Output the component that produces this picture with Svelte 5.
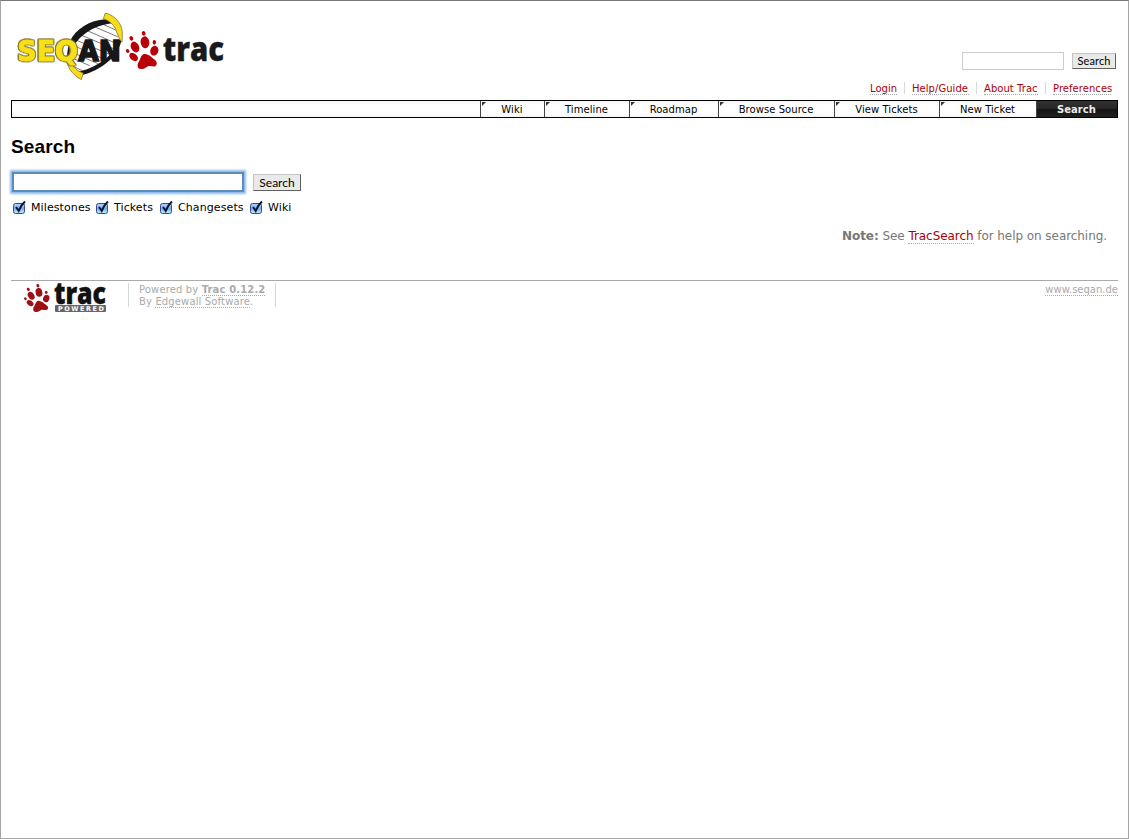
<script>
  const metaLinks = [
    { label: 'Login', width: 27 },
    { label: 'Help/Guide', width: 57 },
    { label: 'About Trac', width: 54 },
    { label: 'Preferences', width: 58 }
  ];
  const tabs = [
    { label: 'Wiki', width: 64 },
    { label: 'Timeline', width: 85 },
    { label: 'Roadmap', width: 89 },
    { label: 'Browse Source', width: 116 },
    { label: 'View Tickets', width: 105 },
    { label: 'New Ticket', width: 97 },
    { label: 'Search', width: 81, active: true }
  ];
  const filters = [
    { label: 'Milestones', width: 83 },
    { label: 'Tickets', width: 64 },
    { label: 'Changesets', width: 90 },
    { label: 'Wiki', width: 50 }
  ];
</script>

{#snippet paw(color)}
  <g fill={color}>
    <ellipse cx="46" cy="30" rx="13" ry="18" transform="rotate(-8 46 30)" />
    <ellipse cx="16" cy="44" rx="12" ry="17" transform="rotate(-26 16 44)" />
    <ellipse cx="74" cy="55" rx="12" ry="15" transform="rotate(18 74 55)" />
    <ellipse cx="12" cy="74" rx="15" ry="10" transform="rotate(42 12 74)" />
    <ellipse cx="42" cy="3" rx="5.5" ry="7" transform="rotate(-20 42 3)" />
    <ellipse cx="74" cy="30" rx="5" ry="7" />
    <ellipse cx="5" cy="18" rx="5.5" ry="7" transform="rotate(-25 5 18)" />
    <ellipse cx="-6" cy="56" rx="5" ry="6" transform="rotate(-40 -6 56)" />
    <path d="M50 66C36 60 34 75 29 85C22 94 21 109 33 110C45 112 50 103 57 101C65 99 74 107 80 98C86 86 71 80 64 73C60 69 56 68 50 66Z" />
  </g>
{/snippet}

<div class="page">
  <header>
    <div class="logo">
      <svg width="216" height="84" viewBox="0 0 648 252">
        <defs><clipPath id="helix"><path d="M291 50C242 59 185 92 181 147C179 170 188 186 208 205C253 193 318 157 330 115C333 85 318 57 291 50Z" /></clipPath></defs>
        <g clip-path="url(#helix)" stroke="#333" stroke-width="2">
          <path d="M165 150L245 185M165 133L295 190M175 115L310 175M185 100L325 160M200 85L335 142M220 72L340 125M240 60L345 105M265 52L350 90M160 170L225 201" />
        </g>
        <path d="M292 46L316 48L316 57C269 62 228 84 206 113C191 129 184 145 182 162L177 162C177 142 181 127 185 113C203 75 246 48 292 46Z" fill="#171717" />
        <path d="M329 107L341 107C333 145 303 176 272 193C248 207 227 213 211 216L212 203C250 195 305 166 319 132Z" fill="#171717" />
        <path d="M292 27C321 34 346 61 343 95L342 115C335 109 332 97 326 84C321 66 306 50 286 44Z" fill="#f8dc18" stroke="#6d631c" stroke-width="2" />
        <path d="M174 157C175 185 190 211 220 227L226 207C203 200 186 183 190 158Z" fill="#f8dc18" stroke="#6d631c" stroke-width="2" />
        <text x="28" y="172" textLength="182" lengthAdjust="spacingAndGlyphs" class="seq">SEQ</text>
        <text x="211" y="172" textLength="128" lengthAdjust="spacingAndGlyphs" class="an">AN</text>
        <g transform="translate(365 85)">{@render paw('#b90009')}</g>
        <text x="464" y="172" textLength="184" lengthAdjust="spacingAndGlyphs" class="tractext">trac</text>
      </svg>
    </div>
    <form class="quick"><input aria-label="Quick search" /><button type="button"><span>Search</span></button></form>
    <div class="meta">{#each metaLinks as link}<span class="metaitem"><a href="#top" style:width="{link.width}px">{link.label}</a></span>{/each}</div>
    <nav>{#each tabs as tab}<a href="#top" class:active={tab.active} style:width="{tab.width}px">{tab.label}</a>{/each}</nav>
  </header>
  <main>
    <h1>Search</h1>
    <form class="mainsearch"><input aria-label="Search terms" /><button type="button"><span>Search</span></button></form>
    <div class="filters">
      {#each filters as filter}
        <label style:width="{filter.width}px">
          <svg width="15" height="16" viewBox="0 0 15 16"><defs><linearGradient id="box" x2="0" y2="1"><stop stop-color="#b9d2f6" /><stop offset=".5" stop-color="#79afee" /><stop offset="1" stop-color="#bef0ff" /></linearGradient></defs><rect x=".5" y="3.5" width="11" height="10" rx="2" fill="url(#box)" stroke="#37488c" /><path d="M3 7L5.7 10.8Q8 5 12 1.5" fill="none" stroke="#08152f" stroke-width="2" /></svg>
          <span>{filter.label}</span>
        </label>
      {/each}
    </div>
    <p class="note"><b>Note:</b> See <a href="#top">TracSearch</a> for help on searching.</p>
  </main>
  <footer>
    <svg class="powered" width="84" height="32" viewBox="0 0 84 32">
      <g transform="translate(4 2) scale(.26 .245)">{@render paw('#9e1015')}</g>
      <text x="31" y="21" textLength="52" lengthAdjust="spacingAndGlyphs" class="smalltrac">trac</text>
      <rect x="32" y="22" width="51" height="7" rx="1" fill="#666" />
      <text x="35" y="28" textLength="46" class="powertext">POWERED</text>
    </svg>
    <p class="credits">Powered by <a href="#top"><b>Trac 0.12.2</b></a><br />By <a href="#top">Edgewall Software</a>.</p>
    <a class="site" href="#top">www.seqan.de</a>
  </footer>
</div>

<style>
  :global(body) { margin: 0; background: #fff; }
  * { box-sizing: border-box; }
  .page { width: 1129px; height: 839px; border: 1px solid #a5a5a5; border-top-color: #777; padding: 3px 10px; font-family: "DejaVu Sans", Verdana, sans-serif; color: #000; overflow: hidden; }
  header { display: grid; grid-template-columns: 216px 1fr; grid-template-rows: 77px 19px 18px; }
  .logo { grid-row: 1 / 3; margin-left: -3px; height: 84px; }
  .logo svg { display: block; overflow: visible; }
  .seq { font: bold 87px "DejaVu Sans"; fill: #f9df18; stroke: #f9df18; stroke-width: 3; filter: drop-shadow(1.5px 0 0 #81752a) drop-shadow(-1.5px 0 0 #81752a) drop-shadow(0 1.5px 0 #81752a) drop-shadow(0 -1.5px 0 #81752a); }
  .an { font: bold 87px "DejaVu Sans"; fill: #171717; stroke: #171717; stroke-width: 5; }
  .tractext { font: 800 99px "Open Sans"; fill: #1a1a1a; stroke: #1a1a1a; stroke-width: 1; }
  .quick { display: flex; justify-content: flex-end; align-items: flex-start; padding: 48px 2px 0 0; gap: 8px; }
  input { margin: 0; padding: 0; background: #fff; outline: 0; border-radius: 0; }
  .quick input { width: 102px; height: 18px; border: 1px solid #ccc; }
  button { display: flex; align-items: center; justify-content: center; padding: 0; border: 1px solid #c4c4c4; border-right-color: #606060; border-bottom-color: #606060; background: #e9e9e9; font: 11px/14px Lato, sans-serif; color: #000; }
  .quick button { width: 44px; height: 16px; margin-top: 1px; letter-spacing: .1px; }
  .meta { display: flex; justify-content: flex-end; padding-right: 7px; height: 19px; }
  .metaitem { display: flex; height: 12px; margin-top: 1px; padding-left: 7px; margin-left: 7px; border-left: 1px solid #d7d7d7; }
  .metaitem:first-child { border-left: 0; }
  .metaitem a { display: block; height: 13px; border-bottom: 1px dotted #aaa; color: #ad0008; text-decoration: none; font-size: 10px; line-height: 13px; white-space: nowrap; letter-spacing: .05px; }
  nav { grid-column: 1 / 3; display: flex; justify-content: flex-end; height: 18px; width: 1107px; border: 1px solid #000; background: linear-gradient(#f5f5f5, #fff 4px, #fff 10px, #f6f6f6); }
  nav a { position: relative; height: 16px; flex: none; padding-right: 1px; border-left: 1px solid #444; color: #000; font-size: 10px; line-height: 17px; text-align: center; text-decoration: none; white-space: nowrap; letter-spacing: .06px; }
  nav a::before { content: ""; position: absolute; left: 1px; top: 1px; border-top: 4px solid #333; border-right: 4px solid transparent; }
  nav .active { color: #eee; font-weight: bold; background: linear-gradient(#333, #252525 50%, #151515 51%, #202020); }
  nav .active::before { display: none; }
  h1 { margin: 18px 0 0; height: 35px; font: bold 19px/21px "Liberation Sans", Arial, sans-serif; letter-spacing: .15px; }
  .mainsearch { display: flex; height: 22px; padding-left: 1px; }
  .mainsearch input { width: 232px; height: 20px; margin-top: 1px; border: 2px solid #5c8cbd; box-shadow: 0 0 2px 2px #8dbbeb; }
  .mainsearch button { width: 48px; height: 17px; margin: 3px 0 0 9px; font-size: 12px; }
  .filters { display: flex; height: 17px; margin-top: 7px; padding-left: 2px; }
  .filters label { display: flex; font-size: 11px; line-height: 16px; white-space: nowrap; letter-spacing: .1px; }
  .filters svg { flex: none; margin-right: 3px; }
  .note { margin: 11px 11px 0 0; height: 52px; text-align: right; font-size: 12px; line-height: 16px; color: #777; white-space: nowrap; letter-spacing: -.06px; }
  .note a { color: #ad0008; text-decoration: none; border-bottom: 1px dotted #aaa; }
  footer { display: flex; width: 1107px; height: 34px; border-top: 1px solid #aaa; color: #aaa; }
  .powered { margin: 2px 0 0 12px; flex: none; overflow: visible; }
  .smalltrac { font: 800 30px "Open Sans"; fill: #111; stroke: #111; stroke-width: .4; }
  .powertext { font: bold 6.5px "DejaVu Sans"; fill: #fff; }
  .credits { position: relative; width: 148px; height: 24px; margin: 2px 0 0 21px; padding: 1px 0 0 10px; border: solid #d7d7d7; border-width: 0 1px; font-size: 10px; line-height: 12px; white-space: nowrap; letter-spacing: .14px; }
  footer a { color: #aaa; text-decoration: none; border-bottom: 1px dotted #aaa; }
  .site { margin: 3px 0 0 auto; height: 12px; font-size: 10px; line-height: 11px; }
</style>
